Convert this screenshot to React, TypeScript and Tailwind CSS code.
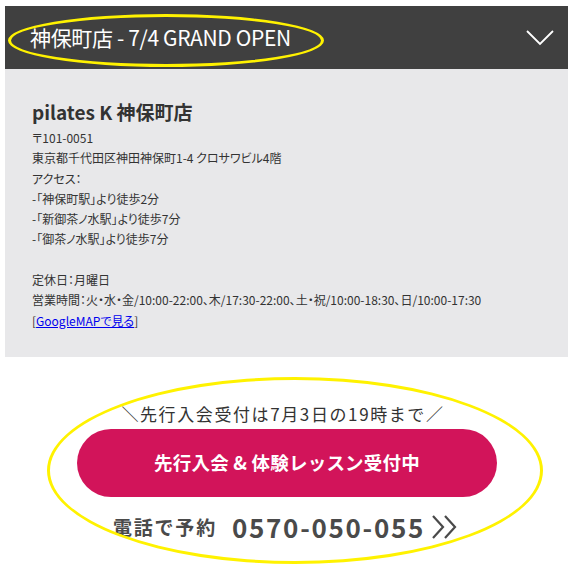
const jp = { fontFamily: '"Noto Sans CJK JP", "Noto Sans", sans-serif' }

function Chevron() {
  return (
    <svg width="28" height="18" viewBox="0 0 28 18" fill="none">
      <path d="M1 2 L14 15 L27 2" stroke="#fff" strokeWidth="1.8" />
    </svg>
  )
}

function DoubleArrow() {
  return (
    <svg width="28" height="24" viewBox="0 0 28 24" fill="none">
      <path d="M2 1 L12 12 L2 23" stroke="#4a4a4a" strokeWidth="2.2" />
      <path d="M14 1 L24 12 L14 23" stroke="#4a4a4a" strokeWidth="2.2" />
    </svg>
  )
}

export default function App() {
  return (
    <div className="relative w-[574px] h-[566px] bg-white overflow-hidden" style={jp}>
      <div className="pl-[5px] pr-[6px] pt-[6px]">
        {/* accordion header */}
        <div className="h-[63px] bg-[#404040] flex items-center justify-between pl-[25px] pr-[14px]">
          <span className="text-white text-[21px] tracking-[-0.35px]">神保町店 - 7/4 GRAND OPEN</span>
          <Chevron />
        </div>

        {/* shop info */}
        <div className="bg-[#e8e8ea] pl-[27px] pt-[28px] pb-[26px] text-[#333] [font-feature-settings:'palt']">
          <h2 className="text-[19px] font-bold leading-[30px] text-[#333]">pilates K 神保町店</h2>
          <div className="mt-[1px] text-[12px] leading-[20.3px] text-[#333]">
            <p>〒101-0051</p>
            <p>東京都千代田区神田神保町1-4 クロサワビル4階</p>
            <p>アクセス：</p>
            <p>-「神保町駅」より徒歩2分</p>
            <p>-「新御茶ノ水駅」より徒歩7分</p>
            <p>-「御茶ノ水駅」より徒歩7分</p>
            <p>&nbsp;</p>
            <p>定休日：月曜日</p>
            <p>営業時間：火・水・金/10:00-22:00、木/17:30-22:00、土・祝/10:00-18:30、日/10:00-17:30</p>
            <p>
              [<a href="#" className="text-[#0000ee] underline">GoogleMAPで見る</a>]
            </p>
          </div>
        </div>
      </div>

      {/* CTA */}
      <div className="flex flex-col items-center pt-[44px]">
        <p className="text-[17px] text-[#333] tracking-[1.6px] leading-[26px] ml-[-8px]">
          ＼先行入会受付は7月3日の19時まで／
        </p>
        <div className="mt-[2px] w-[420px] h-[68px] rounded-full bg-[#d2145a] flex items-center justify-center">
          <span className="text-white text-[18.5px] font-bold tracking-[0.2px]">先行入会 &amp; 体験レッスン受付中</span>
        </div>
        <div className="mt-[13px] flex items-center text-[#4a4a4a] font-bold ml-[-2px]">
          <span className="text-[19px] tracking-[1.8px]">電話で予約</span>
          <span className="ml-[15px] text-[26px] tracking-[1.7px] leading-[34px]">0570-050-055</span>
          <span className="ml-[6px]"><DoubleArrow /></span>
        </div>
      </div>

      {/* yellow annotation ellipses */}
      <div className="absolute left-[8px] top-[14px] w-[316px] h-[53px] rounded-[50%] border-[3px] border-[#fff200] pointer-events-none" />
      <div className="absolute left-[47px] top-[377px] w-[496px] h-[187px] rounded-[50%] border-[3px] border-[#fff200] pointer-events-none" />
    </div>
  )
}
